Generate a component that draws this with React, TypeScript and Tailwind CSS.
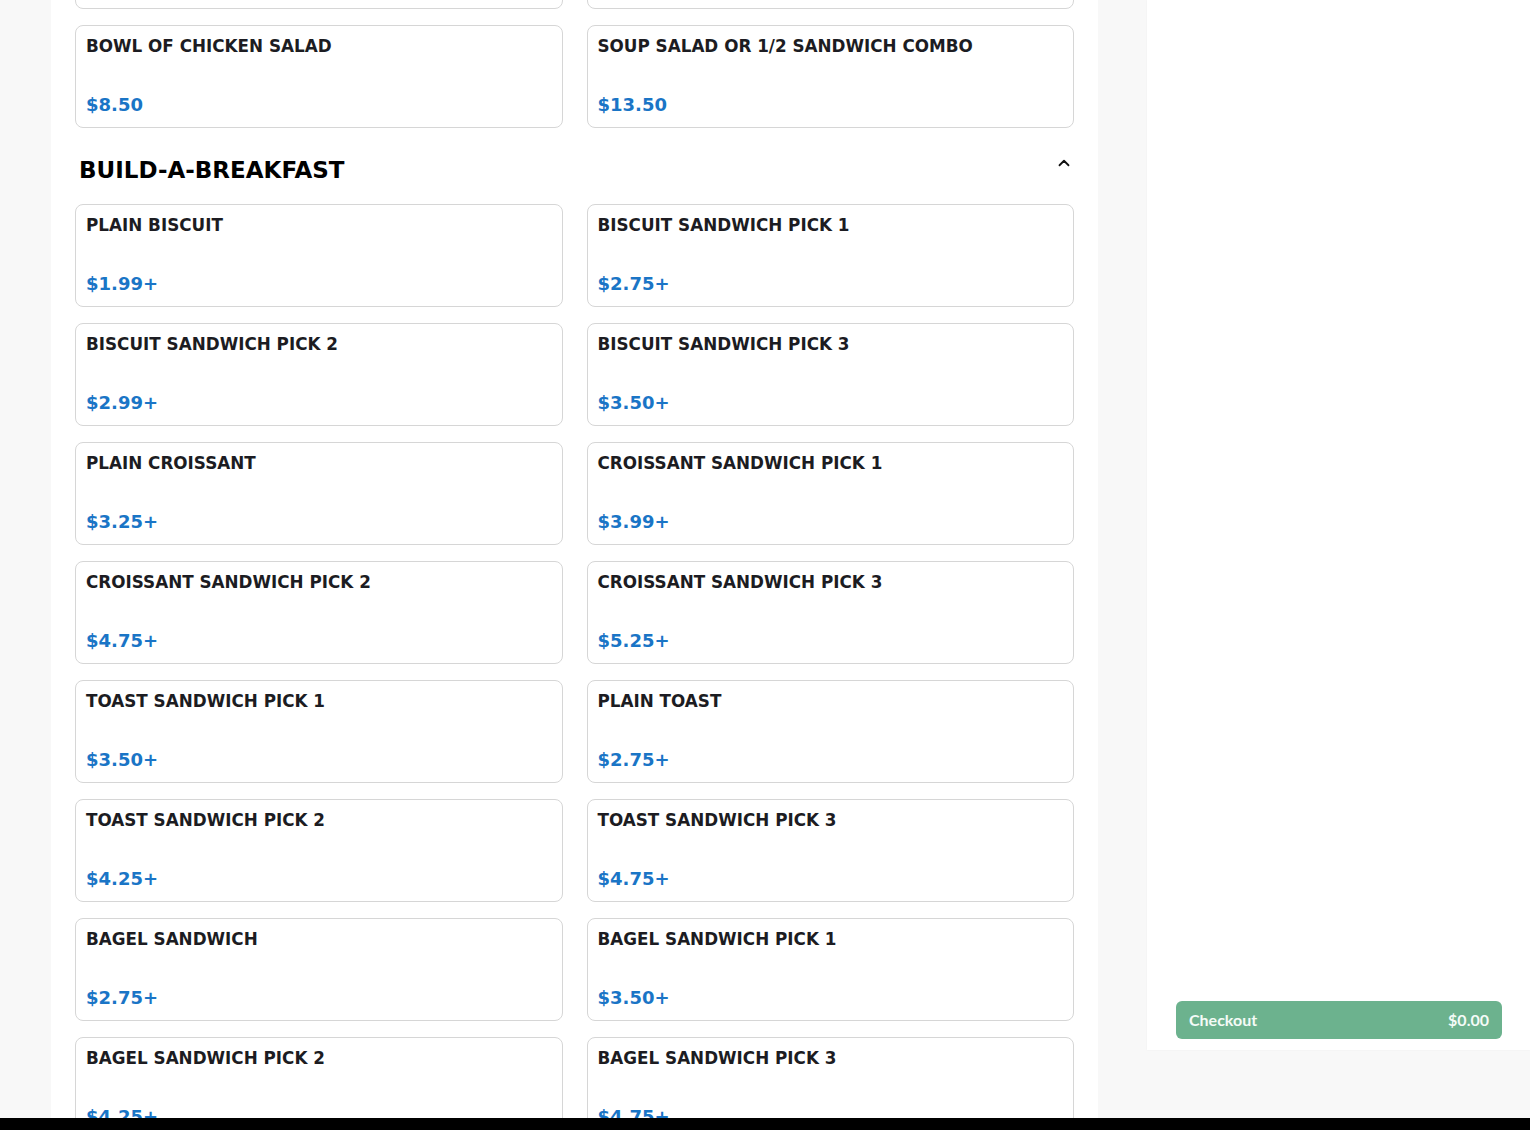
import React from "react";

type Item = { name: string; price: string };

const topRow: Item[] = [
  { name: "BOWL OF SOUP", price: "$6.50" },
  { name: "SOUP AND SALAD", price: "$9.50" },
];

const prevRow: Item[] = [
  { name: "BOWL OF CHICKEN SALAD", price: "$8.50" },
  { name: "SOUP SALAD OR 1/2 SANDWICH COMBO", price: "$13.50" },
];

const breakfast: Item[] = [
  { name: "PLAIN BISCUIT", price: "$1.99+" },
  { name: "BISCUIT SANDWICH PICK 1", price: "$2.75+" },
  { name: "BISCUIT SANDWICH PICK 2", price: "$2.99+" },
  { name: "BISCUIT SANDWICH PICK 3", price: "$3.50+" },
  { name: "PLAIN CROISSANT", price: "$3.25+" },
  { name: "CROISSANT SANDWICH PICK 1", price: "$3.99+" },
  { name: "CROISSANT SANDWICH PICK 2", price: "$4.75+" },
  { name: "CROISSANT SANDWICH PICK 3", price: "$5.25+" },
  { name: "TOAST SANDWICH PICK 1", price: "$3.50+" },
  { name: "PLAIN TOAST", price: "$2.75+" },
  { name: "TOAST SANDWICH PICK 2", price: "$4.25+" },
  { name: "TOAST SANDWICH PICK 3", price: "$4.75+" },
  { name: "BAGEL SANDWICH", price: "$2.75+" },
  { name: "BAGEL SANDWICH PICK 1", price: "$3.50+" },
  { name: "BAGEL SANDWICH PICK 2", price: "$4.25+" },
  { name: "BAGEL SANDWICH PICK 3", price: "$4.75+" },
];

function Card({ item }: { item: Item }) {
  return (
    <div className="h-[103px] rounded-lg border border-[#d6d6d6] bg-white px-[10px] pt-[8px]">
      <div className="text-[16.8px] font-bold leading-[24px] text-[#1c1c22]">{item.name}</div>
      <div className="mt-[35px] text-[18px] font-bold leading-[24px] text-[#1a75c6]">{item.price}</div>
    </div>
  );
}

export default function App() {
  return (
    <div
      className="flex h-[1130px] w-[1530px] flex-col overflow-hidden bg-[#f8f8f8]"
      style={{ fontFamily: '"DejaVu Sans", sans-serif' }}
    >
      <div className="flex min-h-0 flex-1">
        <main className="ml-[51px] w-[1047px] overflow-hidden bg-white px-[24px]">
          <div className="mt-[-94px] grid grid-cols-2 gap-x-[24px] gap-y-[16px]">
            {topRow.map((it) => (
              <Card key={it.name} item={it} />
            ))}
            {prevRow.map((it) => (
              <Card key={it.name} item={it} />
            ))}
          </div>
          <div className="flex items-start justify-between pb-[19px] pl-[4px] pr-[1px] pt-[27px]">
            <h2 className="text-[23px] font-bold leading-[30px] text-black">BUILD-A-BREAKFAST</h2>
            <svg
              width="18"
              height="18"
              viewBox="0 0 24 24"
              fill="none"
              stroke="#111"
              strokeWidth="2.4"
              strokeLinecap="round"
              strokeLinejoin="round"
              className="mt-[-1px]"
            >
              <path d="M6 15l6-6 6 6" />
            </svg>
          </div>
          <div className="grid grid-cols-2 gap-x-[24px] gap-y-[16px]">
            {breakfast.map((it) => (
              <Card key={it.name} item={it} />
            ))}
          </div>
        </main>
        <aside className="ml-[49px] flex h-[1050px] w-[383px] flex-col justify-end bg-white pb-[11px] pl-[29px] pr-[28px] shadow-[0_0_2px_rgba(0,0,0,0.04)]">
          <button
            className="flex h-[38px] w-full items-center justify-between rounded-[6px] bg-[#6cb28e] px-[13px] text-[16px] font-bold text-[#f4fbf7]"
            style={{ fontFamily: 'Lato, "Open Sans", sans-serif' }}
          >
            <span>Checkout</span>
            <span>$0.00</span>
          </button>
        </aside>
      </div>
      <div className="h-[12px] w-full bg-black" />
    </div>
  );
}
